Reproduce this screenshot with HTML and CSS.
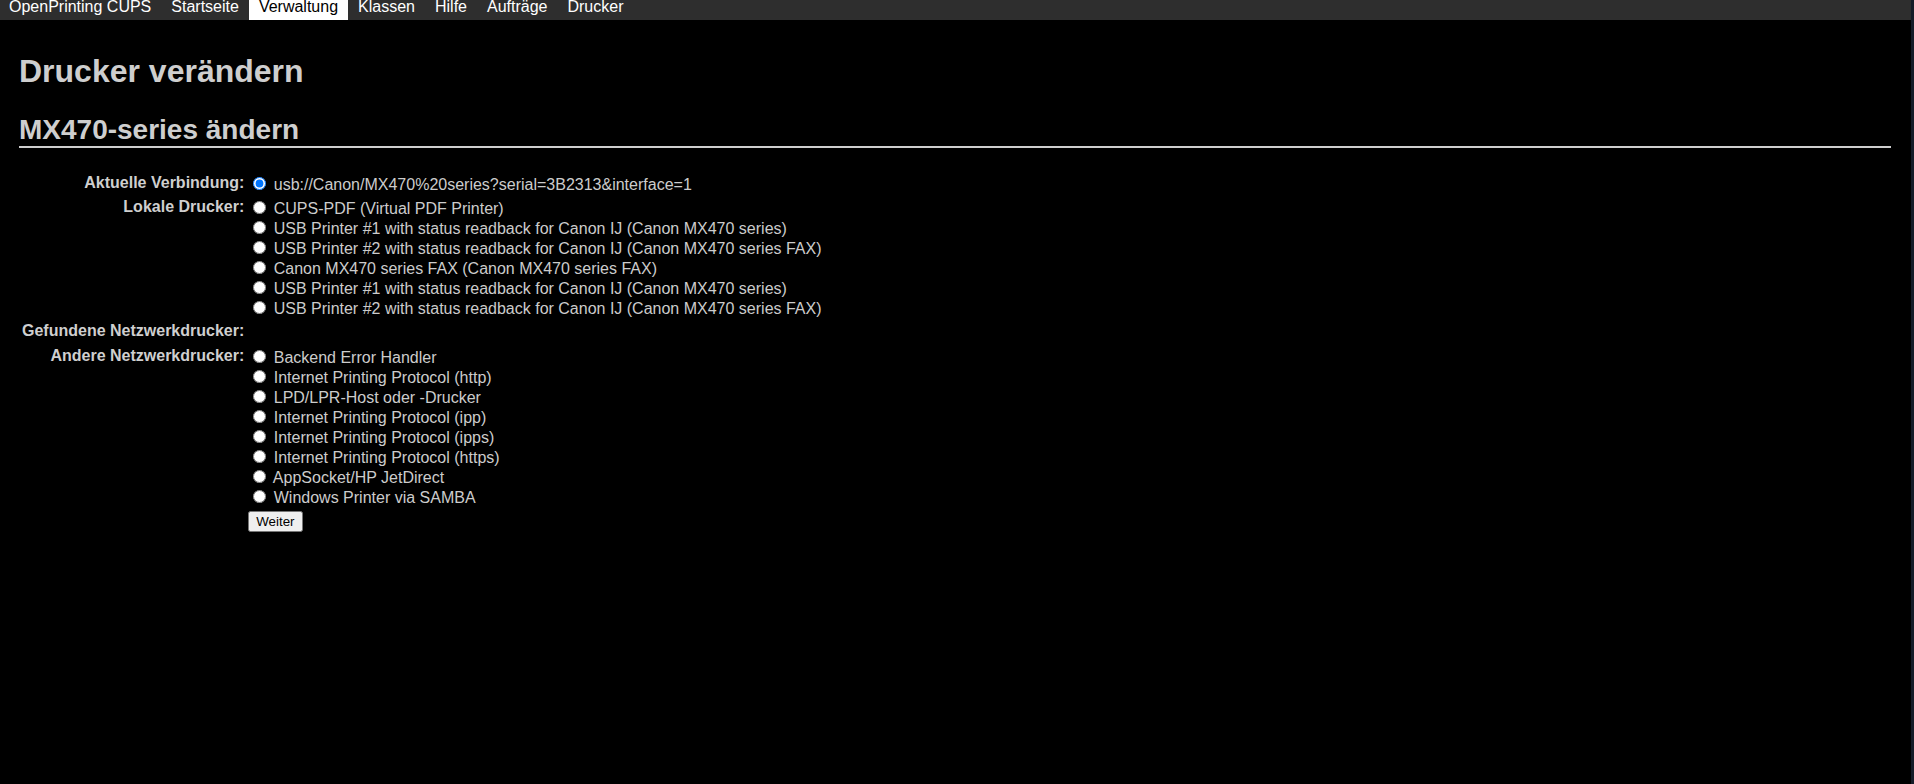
FILE: index.html
```html
<!DOCTYPE html>
<html lang="de">
<head>
<meta charset="utf-8">
<title>Drucker verändern - CUPS</title>
<link rel="stylesheet" href="styles.css">
</head>
<body>
<div class="page">
  <div class="header">
    <ul class="nav">
      <li><a href="#">OpenPrinting CUPS</a></li>
      <li><a href="#">Startseite</a></li>
      <li><a class="active" href="#">Verwaltung</a></li>
      <li><a href="#">Klassen</a></li>
      <li><a href="#">Hilfe</a></li>
      <li><a href="#">Aufträge</a></li>
      <li><a href="#">Drucker</a></li>
    </ul>
  </div>
  <div class="body">
    <h1 class="title">Drucker verändern</h1>
    <h2 class="subtitle">MX470-series ändern</h2>
    <form class="form">
      <table class="table">
        <tr>
          <th class="label">Aktuelle Verbindung:</th>
          <td><input type="radio" name="device_uri" checked> usb://Canon/MX470%20series?serial=3B2313&amp;interface=1</td>
        </tr>
        <tr>
          <th class="label">Lokale Drucker:</th>
          <td>
            <input type="radio" name="device_uri"> CUPS-PDF (Virtual PDF Printer)<br>
            <input type="radio" name="device_uri"> USB Printer #1 with status readback for Canon IJ (Canon MX470 series)<br>
            <input type="radio" name="device_uri"> USB Printer #2 with status readback for Canon IJ (Canon MX470 series FAX)<br>
            <input type="radio" name="device_uri"> Canon MX470 series FAX (Canon MX470 series FAX)<br>
            <input type="radio" name="device_uri"> USB Printer #1 with status readback for Canon IJ (Canon MX470 series)<br>
            <input type="radio" name="device_uri"> USB Printer #2 with status readback for Canon IJ (Canon MX470 series FAX)
          </td>
        </tr>
        <tr>
          <th class="label found">Gefundene Netzwerkdrucker:</th>
          <td></td>
        </tr>
        <tr>
          <th class="label">Andere Netzwerkdrucker:</th>
          <td>
            <input type="radio" name="device_uri"> Backend Error Handler<br>
            <input type="radio" name="device_uri"> Internet Printing Protocol (http)<br>
            <input type="radio" name="device_uri"> LPD/LPR-Host oder -Drucker<br>
            <input type="radio" name="device_uri"> Internet Printing Protocol (ipp)<br>
            <input type="radio" name="device_uri"> Internet Printing Protocol (ipps)<br>
            <input type="radio" name="device_uri"> Internet Printing Protocol (https)<br>
            <input type="radio" name="device_uri"> AppSocket/HP JetDirect<br>
            <input type="radio" name="device_uri"> Windows Printer via SAMBA
          </td>
        </tr>
        <tr>
          <td></td>
          <td><input type="submit" class="button" value="Weiter"></td>
        </tr>
      </table>
    </form>
  </div>
</div>
<div class="edge"></div>
</body>
</html>
```

FILE: styles.css
```css
html, body {
  margin: 0;
  padding: 0;
  height: 100%;
}

body {
  background: #000;
  color: #ccc;
  font-family: "Liberation Sans", Arial, sans-serif;
  font-size: 16px;
  display: flex;
  overflow: hidden;
}

.page {
  flex: 1;
  min-width: 0;
}

.edge {
  width: 3px;
  background: #151c28;
}

.header {
  background: #2e2e2e;
  height: 20px;
  overflow: hidden;
}

.nav {
  list-style: none;
  margin: 0 0 0 -1px;
  padding: 0;
  display: flex;
}

.nav a {
  display: block;
  color: #fff;
  text-decoration: none;
  line-height: 14px;
  height: 20px;
  padding: 0 10px;
  box-sizing: border-box;
}

.nav a.active {
  background: #fff;
  color: #000;
}

.body {
  padding: 0 20px 0 19px;
}

.title {
  font-size: 32px;
  font-weight: bold;
  color: #cecece;
  margin: 33px 0 0;
}

.subtitle {
  font-size: 28px;
  font-weight: bold;
  color: #cecece;
  margin: 24px 0 0;
  border-bottom: 2px solid #cecece;
}

.form {
  margin: 23px 0 0;
}

.table {
  border-spacing: 2px;
  margin: 0;
}

.table td,
.table th {
  padding: 1px;
}

.label {
  text-align: right;
  vertical-align: top;
  white-space: nowrap;
  color: #cfcfcf;
}

.table .found {
  padding-bottom: 4px;
}

.table td {
  vertical-align: top;
  color: #cccccc;
}
```
